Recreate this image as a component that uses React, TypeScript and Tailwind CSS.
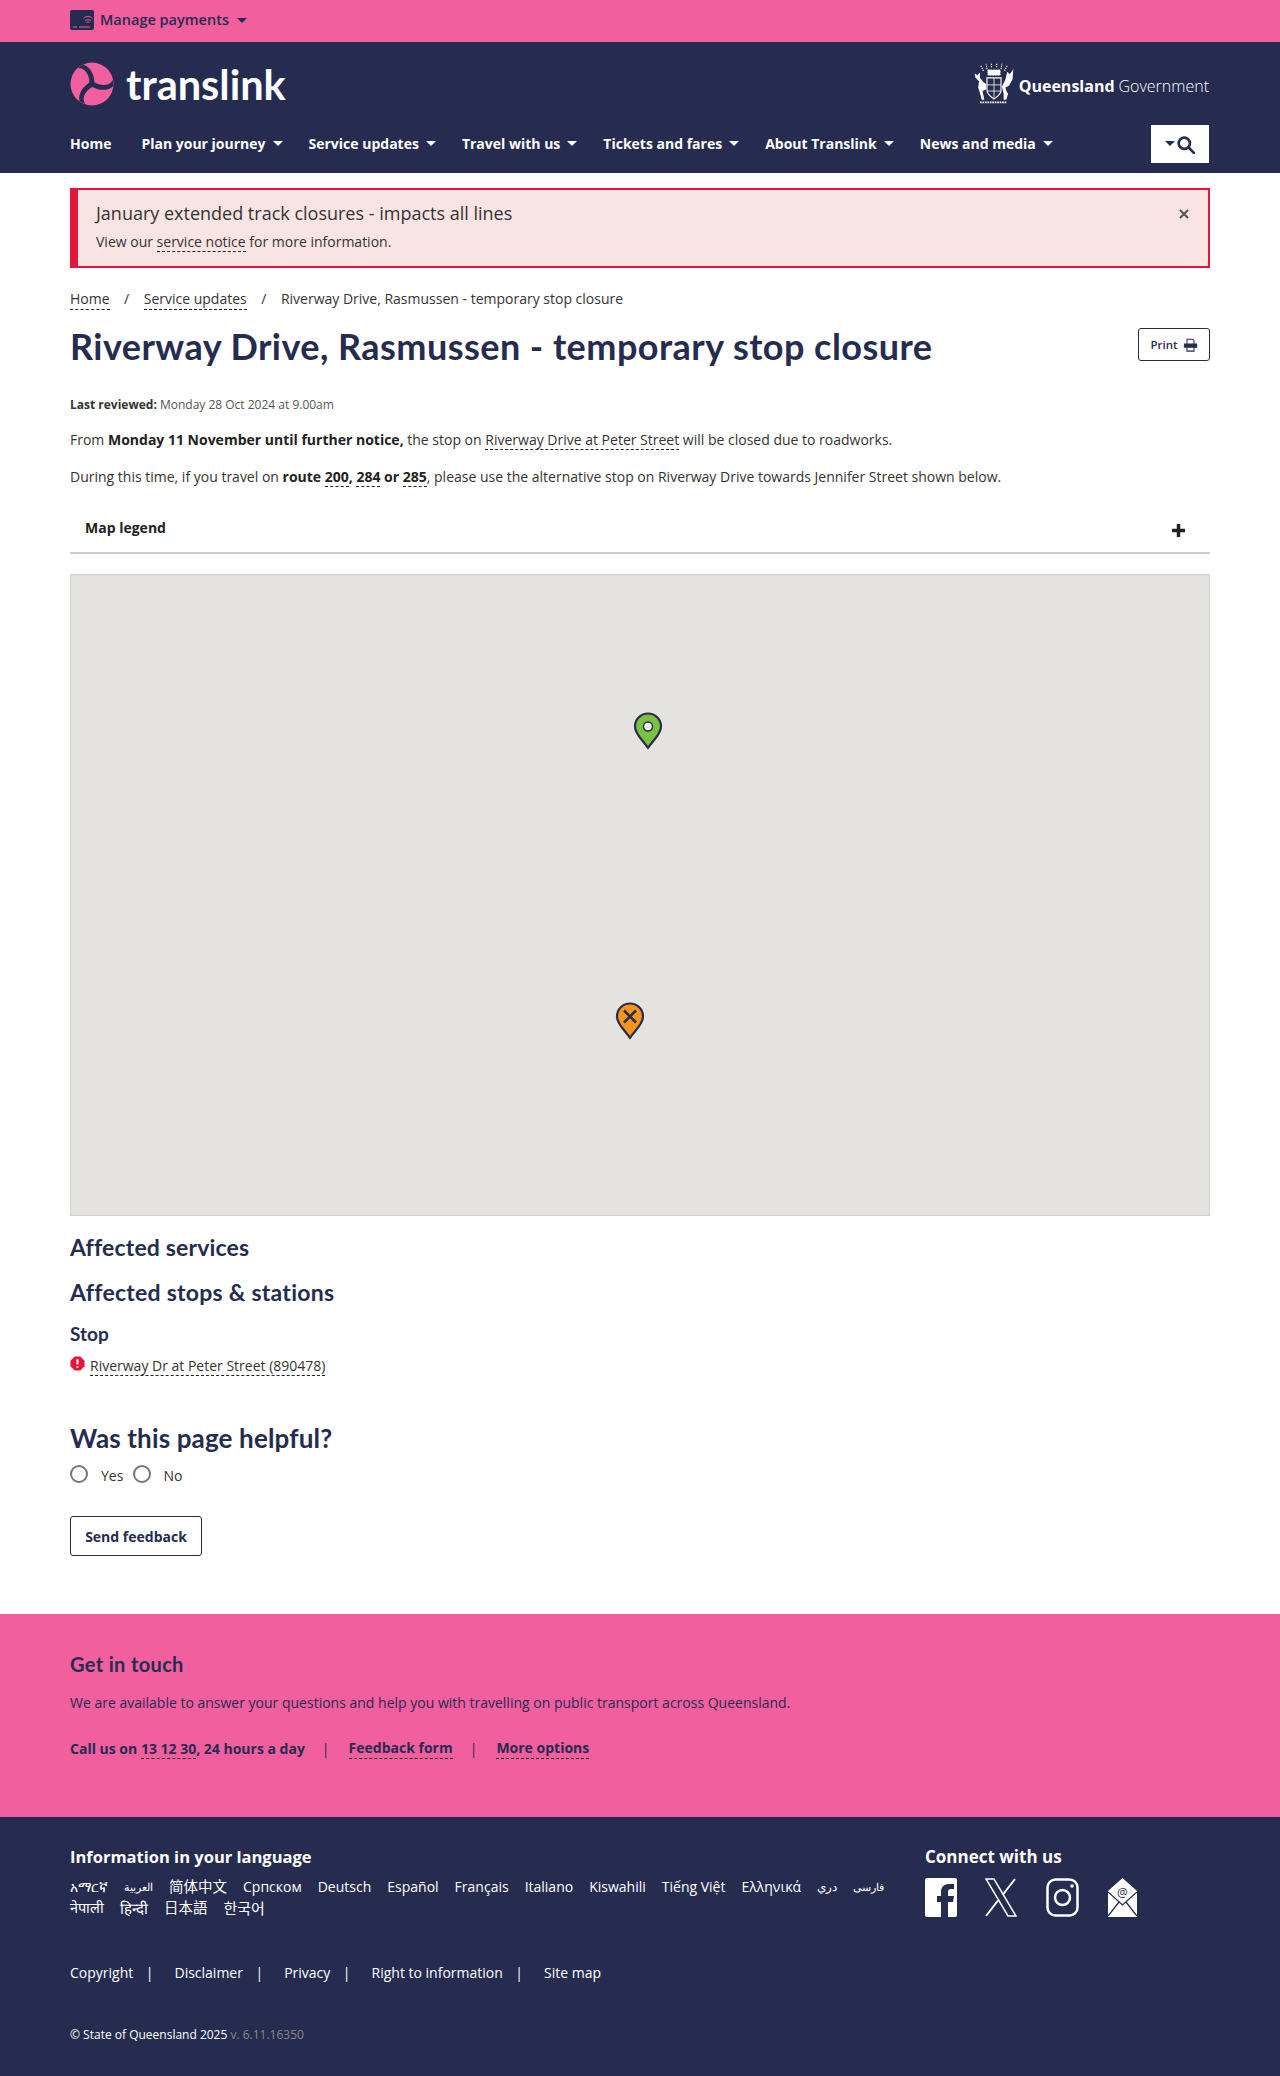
import React from "react";

const sans = "font-['Open_Sans','Noto_Sans_CJK_SC',sans-serif]";
const head = "font-['Lato','Open_Sans',sans-serif]";

function Caret({ className = "" }: { className?: string }) {
  return <span className={`inline-block w-0 h-0 border-l-[5px] border-r-[5px] border-t-[5px] border-l-transparent border-r-transparent ${className}`} />;
}

function DLink({ children, className = "" }: { children: React.ReactNode; className?: string }) {
  return <a className={`border-b border-dashed border-[#222] ${className}`}>{children}</a>;
}

function Logo() {
  const blade = "M8 6 C15 6 19.500 12 19.500 22 L24.500 22 C24.500 12 20 4.500 13 2.500 Z";
  return (
    <svg viewBox="0 0 44 44" className="w-[44px] h-[44px] shrink-0">
      <circle cx="22" cy="22" r="21.500" fill="#f15f9f" />
      <path d={blade} fill="#252c4f" />
      <path d={blade} fill="#252c4f" transform="rotate(120 22 22)" />
      <path d={blade} fill="#252c4f" transform="rotate(240 22 22)" />
    </svg>
  );
}

function Crest() {
  return (
    <svg viewBox="0 0 44 50" className="w-[42px] h-[44px] shrink-0" fill="none" stroke="#fff">
      <path d="M10 10 L7 4 M14 8 L13 2 M19 6 L19 1 M25 6 L25 1 M30 8 L31 2 M34 10 L37 4" strokeWidth="1.300" strokeDasharray="1.500 1" />
      <path d="M15 9 H29 V15 H15 Z" fill="#fff" strokeWidth="0.800" strokeDasharray="2 1" />
      <path d="M14 18 H30 V32 C30 37 26 39 22 42 C18 39 14 37 14 32 Z" strokeWidth="1.300" />
      <path d="M22 18 V42 M14 26 H30 M14 33 H30" strokeWidth="0.900" />
      <path d="M0 13 L3 15 L6 12 L6 18 L10 23 L13 25 L13 31 L9 33 L11 43 H8 L6 35 L4 29 L5 22 L1 18 Z" fill="#fff" stroke="none" />
      <path d="M44 8 L43 20 L39 27 L35 29 L36 33 L38 36 L36 43 H33 L33 36 L31 28 L35 20 L37 11 L40 14 Z" fill="#fff" stroke="none" />
      <path d="M6 46 H36" strokeWidth="2" strokeDasharray="2 0.800" />
    </svg>
  );
}

const navItems = ["Plan your journey", "Service updates", "Travel with us", "Tickets and fares", "About Translink", "News and media"];
const langs: [string, string][] = [
  ["አማርኛ", ""], ["العربية", "text-[11px]"], ["简体中文", "text-[14.500px]"], ["Српском", ""], ["Deutsch", ""], ["Español", ""], ["Français", ""],
  ["Italiano", ""], ["Kiswahili", ""], ["Tiếng Việt", ""], ["Ελληνικά", ""], ["دري", "text-[12px]"], ["فارسی", "text-[11px]"],
  ["नेपाली", "text-[14.500px]"], ["हिन्दी", "text-[15px]"], ["日本語", "text-[14.500px]"], ["한국어", "text-[15px]"],
];

function Sep() {
  return <span className="ml-[12.500px] mr-[21px]">|</span>;
}

export default function App() {
  return (
    <div className={`${sans} text-[14px] text-[#333] bg-white w-[1280px]`}>
      <div className="h-[42px] bg-[#f15f9f] px-[70px] flex items-center text-[#252c4f]">
        <svg viewBox="0 0 24 20" className="w-[24px] h-[20px] mr-[6px] -mt-[2px]">
          <rect width="24" height="20" rx="2" fill="#252c4f" />
          <path d="M3 17h4M9 17h11" stroke="#f15f9f" strokeWidth="1" />
          <path d="M15 11a4 4 0 0 1 6 0M16.500 12.500a2 2 0 0 1 3 0M13.500 8.500a6 6 0 0 1 9 0" stroke="#f15f9f" strokeWidth="0.900" fill="none" />
        </svg>
        <span className="font-semibold text-[14.500px] -mt-[2px]">Manage payments</span>
        <Caret className="border-t-[#252c4f] ml-[8px] -mt-[2px]" />
      </div>

      <header className="bg-[#252c4f] h-[131px] px-[70px] pt-[20px] text-white">
        <div className="flex justify-between items-start h-[44px]">
          <div className="flex items-center gap-[12px]">
            <Logo />
            <span className="font-['Lato',sans-serif] text-[41.500px] font-bold leading-[44px]">translink</span>
          </div>
          <div className="flex items-center gap-[2px] mr-[1px]">
            <Crest />
            <span className="text-[16px] font-bold ml-[2px] mt-[3px]">Queensland</span>
            <span className="text-[16px] font-light ml-[2px] mt-[3px]">Government</span>
          </div>
        </div>
        <nav className="flex items-center justify-between mt-[19px] h-[38px] pr-[1px]">
          <div className="flex items-center gap-[28px] font-bold text-[14px] -mt-[2px]">
            <span className="mr-[2px]">Home</span>
            {navItems.map((n) => (
              <span key={n} className="flex items-center gap-[7px] -mr-[2px]">
                {n}
                <Caret className="border-t-white" />
              </span>
            ))}
          </div>
          <div className="w-[58px] h-[38px] bg-white flex items-center justify-center gap-[2px]">
            <Caret className="border-t-[#252c4f] border-l-[4.500px] border-r-[4.500px] -mt-[2px]" />
            <svg viewBox="0 0 16 16" className="w-[18px] h-[18px] mt-[2px]" fill="none" stroke="#252c4f" strokeWidth="2.400">
              <circle cx="6.500" cy="6.500" r="5" />
              <path d="M10.500 10.500L15 15" strokeLinecap="round" />
            </svg>
          </div>
        </nav>
      </header>

      <main className="px-[70px] pt-[15px]">
        <div className="h-[80px] bg-[#f9e4e4] border-2 border-l-[8px] border-[#e4163a] pl-[18px] pr-[16px] pt-[10px] flex justify-between">
          <div>
            <div className="text-[18px] leading-[26px] text-[#333]">January extended track closures - impacts all lines</div>
            <div className="text-[14px] leading-[20px] mt-[6px]">View our <DLink>service notice</DLink> for more information.</div>
          </div>
          <span className="mt-[9px] mr-[3px]">
            <svg viewBox="0 0 10 10" className="w-[10px] h-[10px]" stroke="#555" strokeWidth="2"><path d="M1 1L9 9M9 1L1 9" /></svg>
          </span>
        </div>

        <div className="flex items-center mt-[21px] h-[20px] text-[14px] leading-[20px]">
          <DLink>Home</DLink>
          <span className="mx-[14.500px]">/</span>
          <DLink>Service updates</DLink>
          <span className="mx-[14.500px]">/</span>
          <span>Riverway Drive, Rasmussen - temporary stop closure</span>
        </div>

        <div className="flex justify-between items-start mt-[13px] h-[48px]">
          <h1 className={`${head} text-[36px] leading-[48px] tracking-[0.450px] font-bold text-[#252c4f]`}>Riverway Drive, Rasmussen - temporary stop closure</h1>
          <button className="w-[72px] h-[33px] mt-[6px] border border-[#252c4f] rounded-[3px] flex items-center justify-center gap-[5px] text-[11.500px] font-semibold text-[#252c4f]">
            Print
            <svg viewBox="0 0 16 16" className="w-[15px] h-[14px]" fill="none" stroke="#252c4f" strokeWidth="1.200">
              <path d="M4 7V1.500H10.500L12 3V7M4 10V15H12V10" />
              <path d="M1 7H15V10.500H1Z" fill="#252c4f" />
            </svg>
          </button>
        </div>

        <div className="mt-[27px] text-[12px] leading-[16px] text-[#555]"><b className="text-[#333]">Last reviewed:</b> Monday 28 Oct 2024 at 9.00am</div>
        <p className="mt-[17px] leading-[20px]">From <b className="text-[#222]">Monday 11 November until further notice,</b> the stop on <DLink>Riverway Drive at Peter Street</DLink> will be closed due to roadworks.</p>
        <p className="mt-[17px] leading-[20px]">During this time, if you travel on <b className="text-[#222]">route <DLink>200</DLink>, <DLink>284</DLink> or <DLink>285</DLink></b>, please use the alternative stop on Riverway Drive towards Jennifer Street shown below.</p>

        <div className="mt-[16px] h-[51px] border-b-2 border-[#ccc] pl-[15px] pr-[25px] flex justify-between items-center">
          <span className="font-bold text-[14px] text-[#222]">Map legend</span>
          <svg viewBox="0 0 12 12" className="w-[13px] h-[13px] mt-[6px]" stroke="#222" strokeWidth="3.200"><path d="M6 0V12M0 6H12" /></svg>
        </div>

        <div className="relative mt-[20px] h-[642px] bg-[#e5e3df] border border-[#cfcfcb]">
          <svg viewBox="0 0 30 38" className="absolute left-[562px] top-[137px] w-[30px] h-[38px]">
            <path d="M15 36 C11 29 2 23 2 14.500 A13 13 0 0 1 28 14.500 C28 23 19 29 15 36Z" fill="#7bc043" stroke="#252c4f" strokeWidth="2.200" strokeLinejoin="round" />
            <circle cx="15" cy="14.500" r="4.500" fill="#fff" stroke="#252c4f" strokeWidth="1.500" />
          </svg>
          <svg viewBox="0 0 30 38" className="absolute left-[544px] top-[427px] w-[30px] h-[38px]">
            <path d="M15 36 C11 29 2 23 2 14.500 A13 13 0 0 1 28 14.500 C28 23 19 29 15 36Z" fill="#f7941f" stroke="#252c4f" strokeWidth="2.200" strokeLinejoin="round" />
            <path d="M9 8.500L21 20.500M21 8.500L9 20.500" stroke="#252c4f" strokeWidth="2.500" />
          </svg>
        </div>

        <h2 className={`${head} mt-[16px] text-[23px] leading-[30px] tracking-[0.150px] font-bold text-[#252c4f]`}>Affected services</h2>
        <h2 className={`${head} mt-[15px] text-[23px] leading-[30px] tracking-[0.250px] font-bold text-[#252c4f]`}>Affected stops &amp; stations</h2>
        <h3 className={`${head} mt-[15px] text-[19px] leading-[24px] font-bold text-[#252c4f]`}>Stop</h3>
        <div className="flex items-start mt-[9px] h-[22px]">
          <svg viewBox="0 0 16 16" className="w-[15px] h-[15px] mr-[5px] mt-[1px]">
            <path d="M5 0.500H11L15.500 5V11L11 15.500H5L0.500 11V5Z" fill="#e4163a" />
            <path d="M8 3.500V9M8 11V12.500" stroke="#fff" strokeWidth="2.200" />
          </svg>
          <DLink className="leading-[19px] mt-[1px]">Riverway Dr at Peter Street (890478)</DLink>
        </div>

        <h2 className={`${head} mt-[45px] text-[26px] leading-[32px] tracking-[0.150px] font-bold text-[#252c4f]`}>Was this page helpful?</h2>
        <div className="flex items-center mt-[8px] h-[24px] text-[14px]">
          <span className="w-[18px] h-[18px] rounded-full border-2 border-[#767676]" />
          <span className="ml-[13px] mt-[3px]">Yes</span>
          <span className="w-[18px] h-[18px] rounded-full border-2 border-[#767676] ml-[10px]" />
          <span className="ml-[12px] mt-[3px]">No</span>
        </div>
        <button className="mt-[30px] w-[132px] h-[40px] border border-[#252c4f] rounded-[3px] font-bold text-[14px] text-[#252c4f]">Send feedback</button>
      </main>

      <section className="mt-[58px] h-[203px] bg-[#f15f9f] px-[70px] pt-[36px] text-[#252c4f]">
        <h2 className={`${head} text-[20px] leading-[28px] tracking-[0.350px] font-bold`}>Get in touch</h2>
        <p className="mt-[15px] leading-[20px]">We are available to answer your questions and help you with travelling on public transport across Queensland.</p>
        <div className="mt-[25px] flex items-center font-bold leading-[20px]">
          <span>Call us on <DLink>13 12 30</DLink>, 24 hours a day</span>
          <span className="ml-[17px] mr-[19px] font-normal">|</span>
          <DLink>Feedback form</DLink>
          <span className="ml-[17px] mr-[19px] font-normal">|</span>
          <DLink>More options</DLink>
        </div>
      </section>

      <footer className="h-[259px] bg-[#252c4f] px-[70px] pt-[28px] text-white">
        <div className="flex">
          <div className="w-[855px]">
            <h3 className="font-bold text-[16.500px] leading-[24px]">Information in your language</h3>
            <div className="mt-[8px] flex flex-wrap items-center gap-x-[16px] gap-y-[1px] text-[14px] leading-[20px] w-[840px]">
              {langs.map(([l, c]) => <span key={l} className={c}>{l}</span>)}
            </div>
          </div>
          <div>
            <h3 className="font-bold text-[17px] leading-[24px]">Connect with us</h3>
            <div className="flex items-start gap-[28px] mt-[9px]">
              <svg viewBox="0 0 32 39" className="w-[32px] h-[39px]">
                <path d="M2 0H30A2 2 0 0 1 32 2V37A2 2 0 0 1 30 39H23V24H28L29 18H23V14C23 12 24 11 26 11H29V6H24C19 6 16 9 16 14V18H12V24H16V39H2A2 2 0 0 1 0 37V2A2 2 0 0 1 2 0Z" fill="#fff" />
              </svg>
              <svg viewBox="0 0 32 39" className="w-[32px] h-[39px]" fill="none" stroke="#fff" strokeWidth="1.500">
                <path d="M1 1H9L31 38H23Z" />
                <path d="M30 1L18 16.500M13 22.500L1 38" strokeWidth="2" />
              </svg>
              <svg viewBox="0 0 33 39" className="w-[33px] h-[39px] ml-[1px]" fill="none" stroke="#fff" strokeWidth="2.500">
                <rect x="1.500" y="1.500" width="30" height="36" rx="8" />
                <circle cx="16.500" cy="19.500" r="7.500" />
                <circle cx="26" cy="8" r="1.800" fill="#fff" stroke="none" />
              </svg>
              <svg viewBox="0 0 29 39" className="w-[29px] h-[39px] ml-[1px]">
                <path d="M14.500 0L29 13V39H0V13Z" fill="#fff" />
                <path d="M0 14L14.500 27L29 14M0 38L11 24M29 38L18 24" stroke="#252c4f" strokeWidth="1.300" fill="none" />
                <text x="14.500" y="19" textAnchor="middle" fontSize="12" fontFamily="'Open Sans',sans-serif" fill="#252c4f">@</text>
              </svg>
            </div>
          </div>
        </div>
        <div className="mt-[45px] flex items-center leading-[20px] text-[14px]">
          <span>Copyright</span><Sep />
          <span>Disclaimer</span><Sep />
          <span>Privacy</span><Sep />
          <span>Right to information</span><Sep />
          <span>Site map</span>
        </div>
        <div className="mt-[42px] text-[12px] leading-[20px]">© State of Queensland 2025 <span className="text-[#888]">v. 6.11.16350</span></div>
      </footer>
    </div>
  );
}
